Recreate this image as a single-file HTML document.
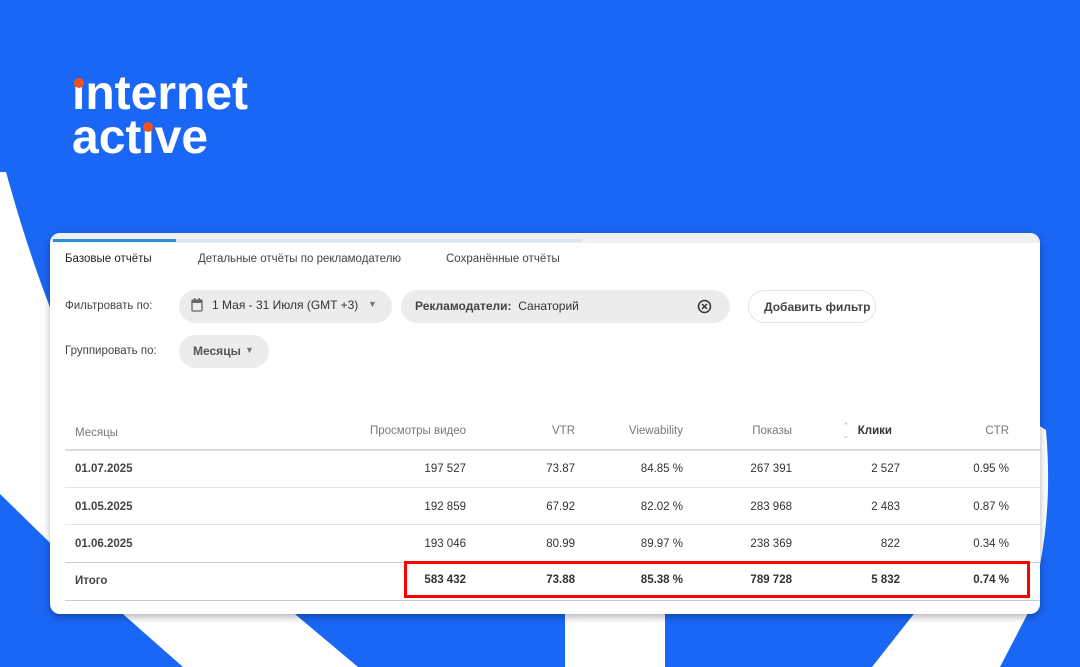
<!DOCTYPE html>
<html><head><meta charset="utf-8"><style>
*{margin:0;padding:0;box-sizing:border-box}
body{width:1080px;height:667px;overflow:hidden;background:#1a66f5;position:relative;font-family:"Liberation Sans","DejaVu Sans",sans-serif;color:#333}
svg.bg{position:absolute;left:0;top:0}
.logo{position:absolute;left:72px;top:72px;color:#fff;font-weight:bold;font-size:48px;line-height:44px;letter-spacing:0px}
.logo .d{position:relative}
.logo .d::before{content:"";position:absolute;left:2px;top:11px;width:10px;height:10px;border-radius:50%;background:#f2511b}
.card{position:absolute;left:50px;top:233px;width:990px;height:381px;background:#fff;border-radius:10px;box-shadow:0 3px 8px rgba(0,0,0,.3);overflow:hidden}
.strip{position:absolute;left:0;top:0;width:990px;height:10px;background:#f0f0f0}
.pb1{position:absolute;left:3px;top:6px;width:123px;height:3px;background:#2a8fd8}
.pb2{position:absolute;left:126px;top:6px;width:406px;height:3px;background:#d5e6f3}
.t{position:absolute;font-size:11.5px;white-space:nowrap}
.pill{position:absolute;background:#ececec;border-radius:17px;height:33px}
.th{color:#777;font-size:11.5px}
.r{text-align:right}
.line{position:absolute;left:15px;width:975px;height:1px;background:#e3e3e3}
.b{font-weight:bold}
</style></head><body>
<svg class="bg" width="1080" height="667">
<path fill="#fff" d="M0,172 L6,172 C18,215 33,265 55,320 L296,615 L358,667 L183,667 L124,615 L0,494 Z"/>
<path fill="#fff" d="M565,560 L665,560 L665,667 L565,667 Z"/>
<path fill="#fff" d="M1030,420 L1046,430 C1052,500 1045,560 1027,615 L1000,667 L872,667 L913,615 Z"/>
</svg>
<div class="logo"><span class="d">ı</span>nternet<br>act<span class="d">ı</span>ve</div>
<div class="card">
<div class="strip"></div><div class="pb1"></div><div class="pb2"></div>
<div class="t" style="left:15px;top:20px;color:#222">Базовые отчёты</div>
<div class="t" style="left:148px;top:20px;color:#444">Детальные отчёты по рекламодателю</div>
<div class="t" style="left:396px;top:20px;color:#444">Сохранённые отчёты</div>
<div class="t" style="left:15px;top:67px;color:#444">Фильтровать по:</div>
<div class="pill" style="left:129px;top:57px;width:213px"></div>
<svg style="position:absolute;left:141px;top:65px" width="12" height="14"><rect x="1" y="2" width="10" height="11" rx="1" fill="none" stroke="#666" stroke-width="1.3"/><rect x="1" y="2" width="10" height="3" fill="#666"/><rect x="3" y="0" width="1.5" height="3" fill="#666"/><rect x="7.5" y="0" width="1.5" height="3" fill="#666"/></svg>
<div class="t" style="left:162px;top:65px;color:#333;font-size:12px">1 Мая - 31 Июля (GMT +3)</div>
<div class="t" style="left:318px;top:66px;color:#777;font-size:9px">▼</div>
<div class="pill" style="left:351px;top:57px;width:329px"></div>
<div class="t" style="left:365px;top:66px;color:#333;font-size:12px"><span style="font-weight:bold;color:#444">Рекламодатели:</span>&nbsp; Санаторий</div>
<svg style="position:absolute;left:647px;top:66px" width="15" height="15"><circle cx="7.5" cy="7.5" r="6" fill="none" stroke="#333" stroke-width="1.5"/><path d="M5,5 L10,10 M10,5 L5,10" stroke="#333" stroke-width="1.5"/></svg>
<div style="position:absolute;left:698px;top:57px;width:128px;height:33px;border:1px solid #e3e3e3;border-radius:17px"></div>
<div class="t b" style="left:714px;top:67px;color:#444;font-size:12px">Добавить фильтр</div>
<div class="t" style="left:15px;top:112px;color:#444">Группировать по:</div>
<div class="pill" style="left:129px;top:102px;width:90px"></div>
<div class="t b" style="left:143px;top:111px;color:#555;font-size:12px">Месяцы</div>
<div class="t" style="left:195px;top:112px;color:#777;font-size:9px">▼</div>

<div class="t th" style="left:25px;top:194px">Месяцы</div>
<div class="t th r" style="right:574px;top:192px">Просмотры видео</div>
<div class="t th r" style="right:465px;top:192px">VTR</div>
<div class="t th r" style="right:357px;top:192px">Viewability</div>
<div class="t th r" style="right:248px;top:192px">Показы</div>
<div class="t r b" style="right:148px;top:192px;color:#333">Клики</div>
<div class="t" style="left:792px;top:189px;color:#bbb;font-size:9px;line-height:9px">⌃<br>⌄</div>
<div class="t th r" style="right:31px;top:192px">CTR</div>
<div class="line" style="top:216px;height:2px;background:#ddd"></div>

<div class="line" style="top:254px"></div>
<div class="line" style="top:291px"></div>
<div class="line" style="top:329px;background:#ccc"></div>
<div class="line" style="top:367px;background:#ccc"></div>

<div class="t b" style="left:25px;top:230px;color:#444">01.07.2025</div>
<div class="t b" style="left:25px;top:268px;color:#444">01.05.2025</div>
<div class="t b" style="left:25px;top:305px;color:#444">01.06.2025</div>
<div class="t b" style="left:25px;top:342px;color:#444">Итого</div>

<div class="t r" style="right:574px;top:230px">197 527</div>
<div class="t r" style="right:465px;top:230px">73.87</div>
<div class="t r" style="right:357px;top:230px">84.85 %</div>
<div class="t r" style="right:248px;top:230px">267 391</div>
<div class="t r" style="right:140px;top:230px">2 527</div>
<div class="t r" style="right:31px;top:230px">0.95 %</div>

<div class="t r" style="right:574px;top:268px">192 859</div>
<div class="t r" style="right:465px;top:268px">67.92</div>
<div class="t r" style="right:357px;top:268px">82.02 %</div>
<div class="t r" style="right:248px;top:268px">283 968</div>
<div class="t r" style="right:140px;top:268px">2 483</div>
<div class="t r" style="right:31px;top:268px">0.87 %</div>

<div class="t r" style="right:574px;top:305px">193 046</div>
<div class="t r" style="right:465px;top:305px">80.99</div>
<div class="t r" style="right:357px;top:305px">89.97 %</div>
<div class="t r" style="right:248px;top:305px">238 369</div>
<div class="t r" style="right:140px;top:305px">822</div>
<div class="t r" style="right:31px;top:305px">0.34 %</div>

<div class="t r b" style="right:574px;top:341px">583 432</div>
<div class="t r b" style="right:465px;top:341px">73.88</div>
<div class="t r b" style="right:357px;top:341px">85.38 %</div>
<div class="t r b" style="right:248px;top:341px">789 728</div>
<div class="t r b" style="right:140px;top:341px">5 832</div>
<div class="t r b" style="right:31px;top:341px">0.74 %</div>

<div style="position:absolute;left:354px;top:328px;width:626px;height:37px;border:3px solid #f00"></div>
</div>
</body></html>
